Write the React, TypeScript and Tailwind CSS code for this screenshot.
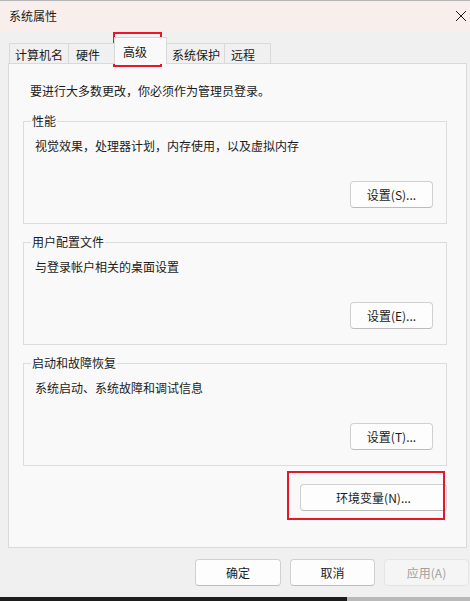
import React from 'react';

const tabs = [
  { label: '计算机名', cls: 'w-[60px] border-l border-r pl-[5px]' },
  { label: '硬件', cls: 'w-[45px] pl-[7px]' },
  { label: '高级', cls: '', active: true },
  { label: '系统保护', cls: 'w-[58px] border-r pl-[5px]' },
  { label: '远程', cls: 'w-[46px] border-r pl-[6px]' },
];

const groups = [
  { title: '性能', desc: '视觉效果，处理器计划，内存使用，以及虚拟内存', btn: '设置(S)...' },
  { title: '用户配置文件', desc: '与登录帐户相关的桌面设置', btn: '设置(E)...' },
  { title: '启动和故障恢复', desc: '系统启动、系统故障和调试信息', btn: '设置(T)...' },
];

const btnCls =
  'h-[27px] rounded-[4px] border border-[#d0d0d0] border-b-[#bcbcbc] bg-[#fdfdfd] text-[12px] leading-4 text-[#1b1b1b]';

const App = () => {
  return (
    <div className="relative w-[470px] h-[601px] overflow-hidden bg-[#f0f0f0] font-['Noto_Sans_CJK_SC',sans-serif] text-[12px] leading-4 text-[#1b1b1b]">
      {/* Title bar */}
      <div className="h-[31px] border-t border-[#b4b4b4] bg-[#f8efec] flex items-center justify-between pl-[9px] pr-[3px]">
        <span className="-mt-[1px]">系统属性</span>
        <svg width="12" height="12" viewBox="0 0 12 12" className="-mt-[1px]">
          <path d="M1 1 L11 11 M11 1 L1 11" stroke="#1b1b1b" strokeWidth="1" />
        </svg>
      </div>

      {/* Tabs */}
      <div className="relative z-10 -mb-px flex h-[33px] items-end pl-[9px]">
        {tabs.map((t) =>
          t.active ? (
            <div
              key={t.label}
              className="h-[27px] w-[53px] border-l border-r border-t border-[#d9d9d9] bg-[#f9f9f9] pl-[8px] pt-[6px]"
            >
              {t.label}
            </div>
          ) : (
            <div
              key={t.label}
              className={`h-[21px] border-t border-b border-[#d9d9d9] bg-[#f0f0f0] pt-[3px] ${t.cls}`}
            >
              {t.label}
            </div>
          )
        )}
      </div>

      {/* Tab panel */}
      <div className="mx-[8px] h-[485px] w-[459px] border border-[#d9d9d9] bg-[#f9f9f9] px-[14px] pt-[19px]">
        <div className="ml-[7px]">要进行大多数更改，你必须作为管理员登录。</div>

        <div className="mt-[22px] flex w-[424px] flex-col gap-[18px]">
          {groups.map((g) => (
            <div key={g.title} className="h-[103px] border border-[#dcdcdc]">
              <div className="-mt-[9px] ml-[7px] w-fit bg-[#f9f9f9] px-[1px]">{g.title}</div>
              <div className="ml-[11px] mt-[9px]">{g.desc}</div>
              <div className="mt-[27px] flex justify-end pr-[13px]">
                <button className={`${btnCls} w-[83px]`}>{g.btn}</button>
              </div>
            </div>
          ))}
        </div>

        <div className="mt-[18px] flex w-[424px] justify-end">
          <button className={`${btnCls} w-[147px]`}>环境变量(N)...</button>
        </div>
      </div>

      {/* Footer buttons */}
      <div className="mt-[11px] flex justify-end gap-[9px] pr-[1px]">
        <button className={`${btnCls} w-[86px] border-[#0067c0] border-b-[#0067c0]`}>确定</button>
        <button className={`${btnCls} w-[85px]`}>取消</button>
        <button className="h-[27px] w-[85px] rounded-[4px] border border-[#e5e5e5] bg-[#f5f5f5] text-[12px] leading-4 text-[#a0a0a0]">
          应用(A)
        </button>
      </div>

      {/* Desktop strip below window */}
      <div className="mt-[11px] flex h-[4px]">
        <div className="w-[347px] bg-[#1c1c1c]" />
        <div className="flex-1 bg-[#b9b9b9]" />
      </div>

      {/* Annotation boxes */}
      <div className="absolute left-[113px] top-[32px] h-[35px] w-[49px] border-2 border-[#e5182a]" />
      <div className="absolute left-[287px] top-[471px] h-[49px] w-[158px] border-2 border-[#e5182a]" />
    </div>
  );
};

export default App;
